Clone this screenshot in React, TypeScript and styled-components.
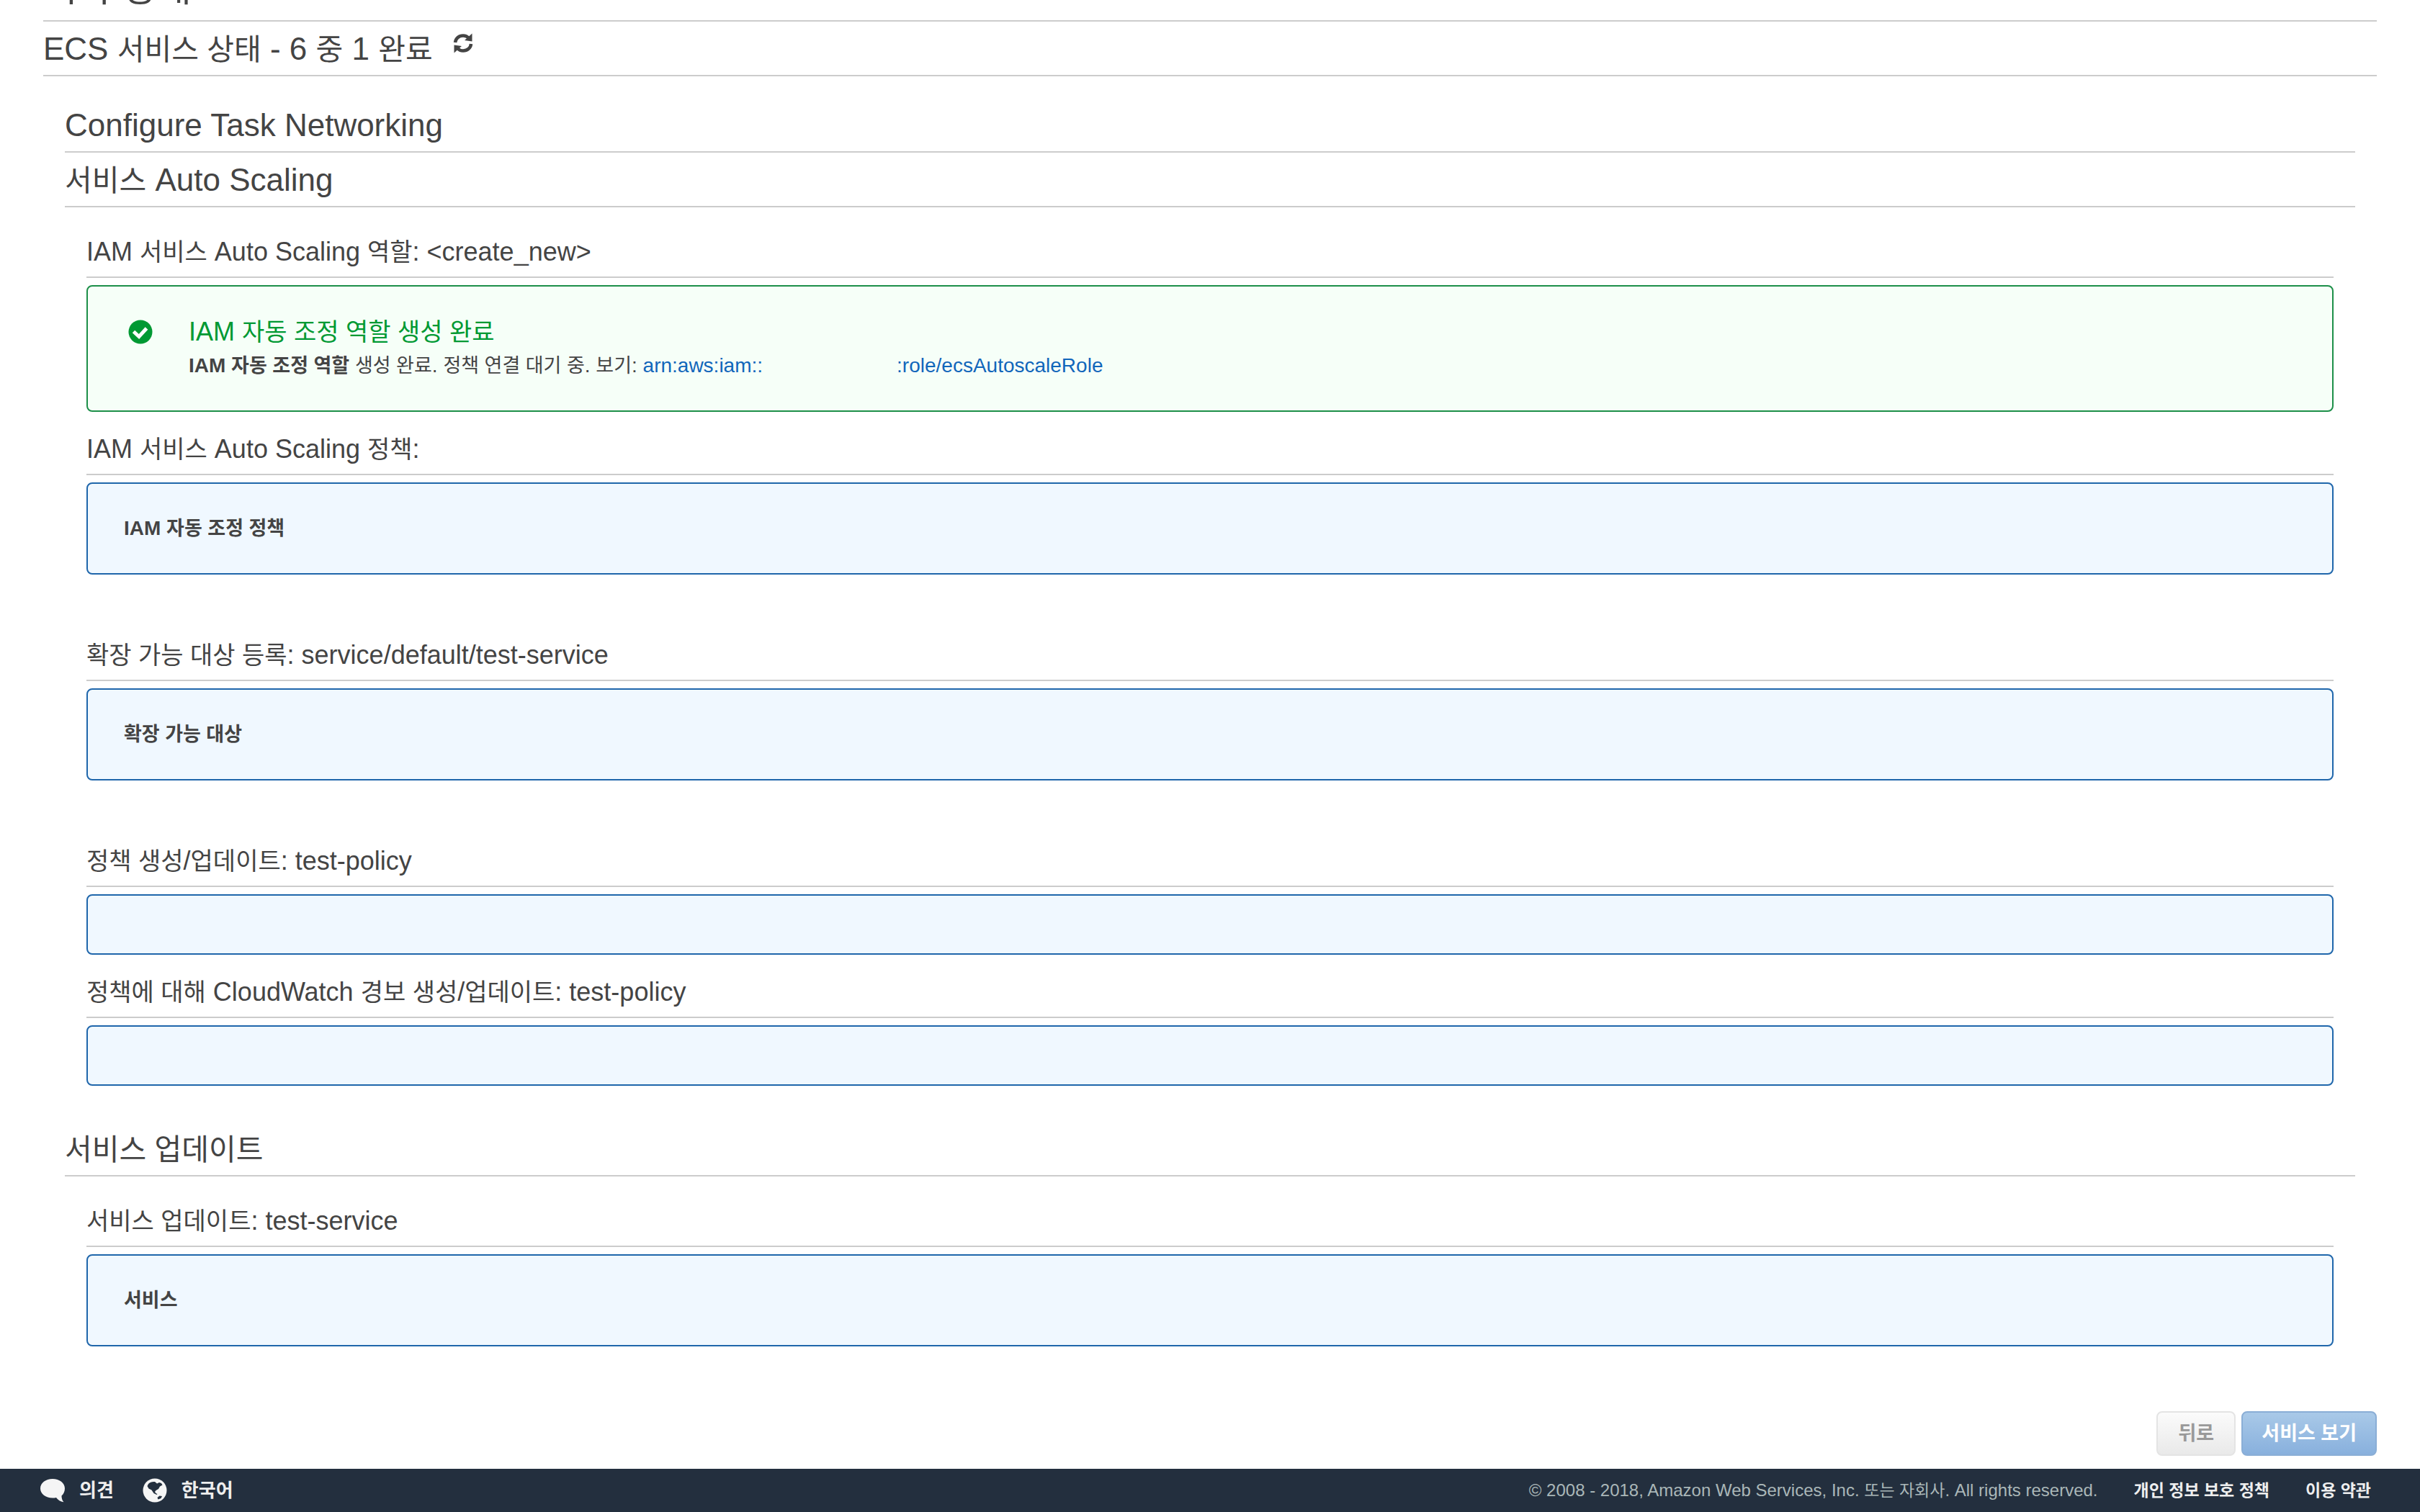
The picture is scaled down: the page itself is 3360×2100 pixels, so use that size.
import React from "react";
import styled, { createGlobalStyle } from "styled-components";

const GlobalStyle = createGlobalStyle`
  * { box-sizing: border-box; }
  html, body { margin: 0; }
  body {
    background: #fff;
    color: #444;
    font-family: "Liberation Sans", "Noto Sans CJK KR", sans-serif;
    font-size: 28px;
    line-height: 36px;
  }
  [lang="ko"] { font-size: 27px; line-height: 1; }
`;

const Screen = styled.div`
  display: flex;
  flex-direction: column;
  height: 100vh;
  overflow: hidden;
`;

const Content = styled.main`
  flex: 1;
  min-height: 0;
  display: flex;
  flex-direction: column;
  padding: 0 60px;
  overflow: hidden;
`;

const PageTitle = styled.h1`
  margin: -50px 0 0;
  padding-bottom: 10px;
  border-bottom: 2px solid #ccc;
  font-size: 52px;
  line-height: 68px;
  font-weight: 400;
`;

const Heading = styled.h2`
  display: flex;
  align-items: flex-start;
  gap: 28px;
  margin: 0;
  padding: 12px 0 10px;
  border-bottom: 2px solid #ccc;
  font-size: 44px;
  line-height: 52px;
  font-weight: 400;

  [lang="ko"] {
    font-size: 41px;
  }
`;

const Subheading = styled.h3`
  margin: 0;
  padding: 0 0 12px;
  border-bottom: 2px solid #ccc;
  font-size: 36px;
  line-height: 44px;
  font-weight: 400;

  [lang="ko"] {
    font-size: 34px;
  }
`;

const Nested = styled.div<{ $top: number }>`
  padding: ${(p) => p.$top}px 30px 0;
`;

const Step = styled.section<{ $after: number }>`
  margin-bottom: ${(p) => p.$after}px;
`;

const StatusBox = styled.div<{ $success?: boolean; $height: number }>`
  display: flex;
  margin-top: 10px;
  min-height: ${(p) => p.$height}px;
  padding: ${(p) => (p.$success ? "40px 56px" : "44px 50px 34px")};
  border: 2px solid ${(p) => (p.$success ? "#1d8f49" : "#1f66ab")};
  border-radius: 8px;
  background: ${(p) => (p.$success ? "#f6fff8" : "#f0f8ff")};
`;

const CheckIcon = styled.svg`
  flex: none;
  width: 34px;
  height: 34px;
  margin: 6px 50px 0 0;
`;

const Message = styled.div`
  flex: 1;
`;

const MessageTitle = styled.h4`
  margin: 0;
  color: #093;
  font-size: 36px;
  line-height: 46px;
  font-weight: 400;

  [lang="ko"] {
    font-size: 34px;
  }
`;

const MessageText = styled.p`
  margin: 6px 0 0;
`;

const Arn = styled.a`
  color: #1166bb;
  text-decoration: none;
`;

const Masked = styled.span`
  display: inline-block;
  width: 186px;
`;

const IconButton = styled.button`
  display: flex;
  margin: 4px 0 0;
  padding: 0;
  border: 0;
  background: none;
  color: #444;
`;

const Actions = styled.div`
  display: flex;
  justify-content: flex-end;
  gap: 8px;
  margin-top: auto;
  padding-bottom: 18px;
`;

const ActionButton = styled.button<{ $primary?: boolean }>`
  min-width: 110px;
  height: 62px;
  padding: 0 26px;
  border: 2px solid ${(p) => (p.$primary ? "#8aaed6" : "#e4e4e4")};
  border-radius: 8px;
  background: ${(p) =>
    p.$primary
      ? "linear-gradient(#a9c9e8, #88b0dd)"
      : "linear-gradient(#fbfbfb, #e9e9e9)"};
  color: ${(p) => (p.$primary ? "#fff" : "#999")};
  font: inherit;
  font-size: 27px;
  font-weight: 700;
`;

const Footer = styled.footer`
  display: flex;
  align-items: center;
  justify-content: space-between;
  height: 60px;
  padding: 0 68px 0 56px;
  background: #232f3e;
`;

const FooterGroup = styled.div<{ $gap: number }>`
  display: flex;
  align-items: center;
  gap: ${(p) => p.$gap}px;
`;

const FooterButton = styled.button`
  display: flex;
  align-items: center;
  gap: 20px;
  padding: 0;
  border: 0;
  background: none;
  color: #eee;
  font: inherit;
  font-size: 26px;
  font-weight: 700;
`;

const FooterLink = styled.a`
  color: #eee;
  font-size: 23px;
  font-weight: 700;
  text-decoration: none;
`;

const Copyright = styled.span`
  color: #aab7b8;
  font-size: 24px;

  [lang="ko"] {
    font-size: 23px;
  }
`;

/* Hangul fills more of its em box than Latin, so its runs are tagged and set one step smaller. */
function Mixed({ text }: { text: string }) {
  const runs = text.split(/([\uac00-\ud7a3]+(?: [\uac00-\ud7a3]+)*)/);
  return (
    <span>
      {runs.map((run, i) =>
        i % 2 ? (
          <span key={i} lang="ko">
            {run}
          </span>
        ) : (
          run
        )
      )}
    </span>
  );
}

function RefreshIcon() {
  return (
    <svg width="28" height="28" viewBox="0 0 28 28" aria-hidden="true">
      <g fill="none" stroke="currentColor" strokeWidth="4.5">
        <path d="M3 13C3.500 7.500 8 3.500 14 3.500c3.500 0 6 1.300 8 3.500" />
        <path d="M25 15C24.500 20.500 20 24.500 14 24.500c-3.500 0-6-1.300-8-3.500" />
      </g>
      <path fill="currentColor" d="M26.500 0.500V11.500L16 10zM1.500 27.500V16.500L12 18z" />
    </svg>
  );
}

function Check() {
  return (
    <CheckIcon viewBox="0 0 34 34" aria-hidden="true">
      <circle cx="17" cy="17" r="16.500" fill="#093" />
      <path d="M7.500 16.500l7.500 7L25.500 12" fill="none" stroke="#fff" strokeWidth="5" />
    </CheckIcon>
  );
}

function BubbleIcon() {
  return (
    <svg width="34" height="34" viewBox="0 0 34 34" aria-hidden="true">
      <path
        fill="#f5f5f5"
        d="M17 1C7.500 1 0 6.800 0 14.200S7.500 27.500 17 27.500c1.800 0 3.500-.2 5-.6 2.500 3.500 6 5.600 10.500 6.300-2-2.200-3-5-3-8.700 2.800-2.600 4.500-6.200 4.500-10.300C34 6.800 26.500 1 17 1z"
      />
    </svg>
  );
}

function GlobeIcon() {
  return (
    <svg width="34" height="34" viewBox="0 0 34 34" aria-hidden="true">
      <circle cx="17" cy="17" r="16.500" fill="#f5f5f5" />
      <path
        fill="#232f3e"
        d="M8 8C10 5.500 14 4.500 17 5l3 2.500 3-1.500 3 1 1.500 2.500-3.500 2-2 3.500-3.500 2-1.500 2 1.500 2 2 1-1 1-4-2-3-4.500-4-2L6.500 11z"
      />
      <path fill="#232f3e" d="M20.500 27l3-2.500 3.500.5-1.500 3-4 1.500z" />
    </svg>
  );
}

export default function App() {
  return (
    <>
      <GlobalStyle />
      <Screen>
        <Content>
          <PageTitle>시작 상태</PageTitle>
          <Heading>
            <Mixed text="ECS 서비스 상태 - 6 중 1 완료" />
            <IconButton aria-label="새로 고침">
              <RefreshIcon />
            </IconButton>
          </Heading>
          <Nested $top={30}>
            <Heading>Configure Task Networking</Heading>
            <Heading>
              <Mixed text="서비스 Auto Scaling" />
            </Heading>
            <Nested $top={40}>
              <Step $after={30}>
                <Subheading>
                  <Mixed text="IAM 서비스 Auto Scaling 역할: <create_new>" />
                </Subheading>
                <StatusBox $success $height={176}>
                  <Check />
                  <Message>
                    <MessageTitle>
                      <Mixed text="IAM 자동 조정 역할 생성 완료" />
                    </MessageTitle>
                    <MessageText>
                      <b>
                        <Mixed text="IAM 자동 조정 역할" />
                      </b>{" "}
                      <Mixed text="생성 완료. 정책 연결 대기 중. 보기: " />
                      <Arn href="#role">
                        arn:aws:iam::
                        <Masked />
                        :role/ecsAutoscaleRole
                      </Arn>
                    </MessageText>
                  </Message>
                </StatusBox>
              </Step>
              <Step $after={90}>
                <Subheading>
                  <Mixed text="IAM 서비스 Auto Scaling 정책:" />
                </Subheading>
                <StatusBox $height={128}>
                  <b>
                    <Mixed text="IAM 자동 조정 정책" />
                  </b>
                </StatusBox>
              </Step>
              <Step $after={90}>
                <Subheading>
                  <Mixed text="확장 가능 대상 등록: service/default/test-service" />
                </Subheading>
                <StatusBox $height={128}>
                  <b>
                    <Mixed text="확장 가능 대상" />
                  </b>
                </StatusBox>
              </Step>
              <Step $after={30}>
                <Subheading>
                  <Mixed text="정책 생성/업데이트: test-policy" />
                </Subheading>
                <StatusBox $height={84} />
              </Step>
              <Step $after={50}>
                <Subheading>
                  <Mixed text="정책에 대해 CloudWatch 경보 생성/업데이트: test-policy" />
                </Subheading>
                <StatusBox $height={84} />
              </Step>
            </Nested>
            <Heading>
              <Mixed text="서비스 업데이트" />
            </Heading>
            <Nested $top={40}>
              <Step $after={0}>
                <Subheading>
                  <Mixed text="서비스 업데이트: test-service" />
                </Subheading>
                <StatusBox $height={128}>
                  <b>
                    <Mixed text="서비스" />
                  </b>
                </StatusBox>
              </Step>
            </Nested>
          </Nested>
          <Actions>
            <ActionButton>뒤로</ActionButton>
            <ActionButton $primary>서비스 보기</ActionButton>
          </Actions>
        </Content>
        <Footer>
          <FooterGroup $gap={40}>
            <FooterButton>
              <BubbleIcon />
              의견
            </FooterButton>
            <FooterButton>
              <GlobeIcon />
              한국어
            </FooterButton>
          </FooterGroup>
          <FooterGroup $gap={50}>
            <Copyright>
              <Mixed text="© 2008 - 2018, Amazon Web Services, Inc. 또는 자회사. All rights reserved." />
            </Copyright>
            <FooterLink href="#privacy">개인 정보 보호 정책</FooterLink>
            <FooterLink href="#terms">이용 약관</FooterLink>
          </FooterGroup>
        </Footer>
      </Screen>
    </>
  );
}
